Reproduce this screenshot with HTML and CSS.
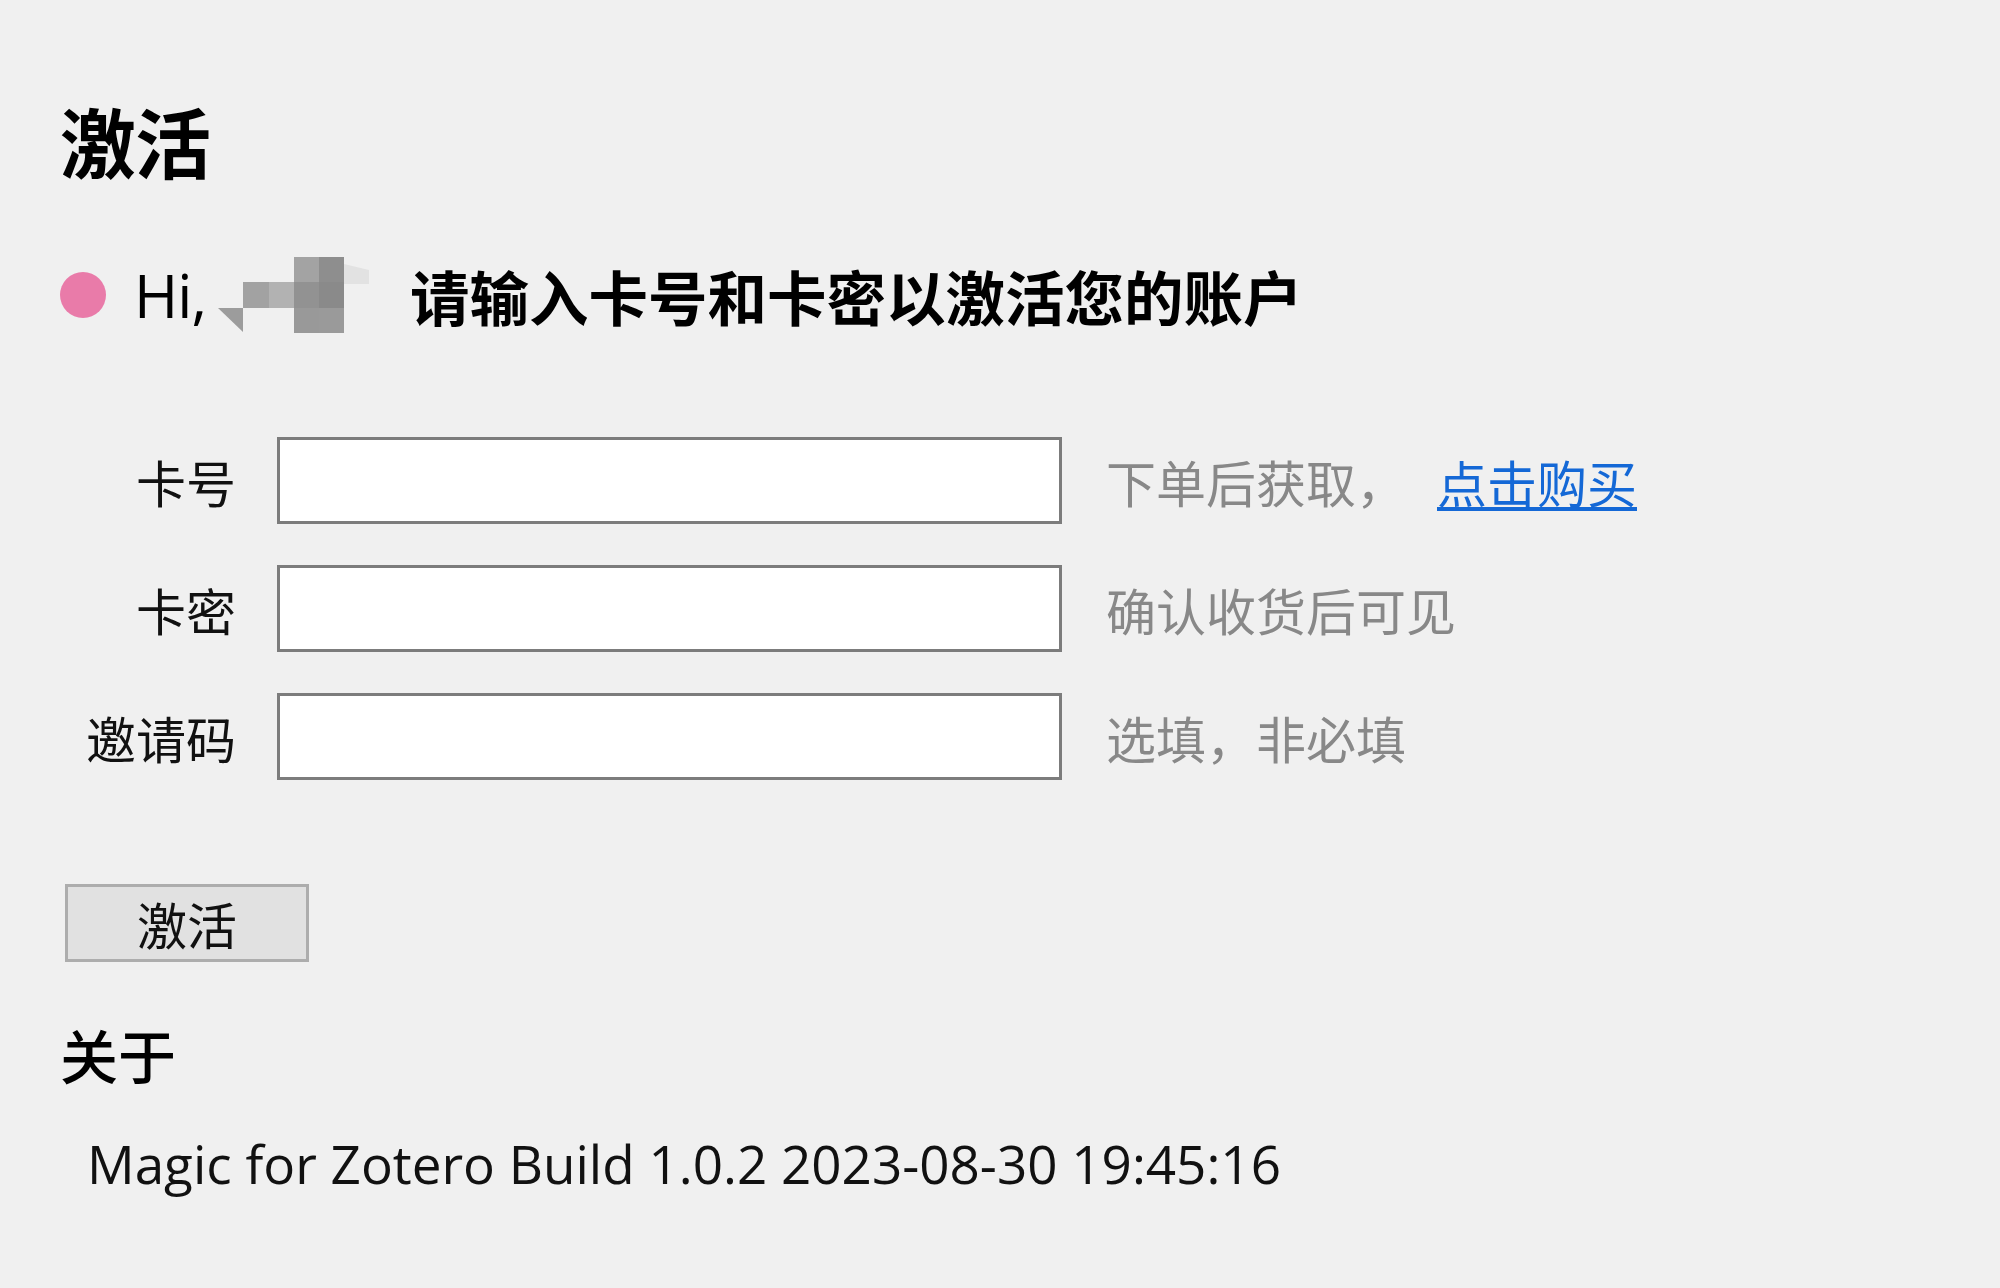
FILE: index.html
```html
<!DOCTYPE html>
<html lang="zh-CN">
<head>
<meta charset="utf-8">
<title>激活</title>
<link rel="stylesheet" href="styles.css">
</head>
<body>
<div class="page">
  <h1 class="title">激活</h1>
  <div class="greet">
    <span class="dot"></span>
    <span class="hi">Hi,</span>
    <svg class="mosaic" width="152" height="78" viewBox="217 258 152 78">
      <polygon points="217,310 242,310 242,334" fill="#9c9c9c"/>
      <rect x="242" y="284" width="26" height="26" fill="#a2a2a2"/>
      <rect x="268" y="284" width="25" height="26" fill="#b2b2b2"/>
      <rect x="293" y="259" width="25" height="25" fill="#a3a3a3"/>
      <rect x="293" y="284" width="25" height="26" fill="#929292"/>
      <rect x="293" y="310" width="25" height="25" fill="#999999"/>
      <rect x="318" y="259" width="25" height="25" fill="#8e8e8e"/>
      <rect x="318" y="284" width="25" height="26" fill="#8a8a8a"/>
      <rect x="318" y="310" width="25" height="25" fill="#9a9a9a"/>
      <polygon points="343,266 368,272 368,286 343,286" fill="#e2e2e2"/>
    </svg>
    <span class="prompt">请输入卡号和卡密以激活您的账户</span>
  </div>
  <div class="form">
    <label class="label">卡号</label>
    <div class="input"></div>
    <div class="hint">下单后获取，<a class="buy" href="#">点击购买</a></div>
    <label class="label">卡密</label>
    <div class="input"></div>
    <div class="hint">确认收货后可见</div>
    <label class="label">邀请码</label>
    <div class="input"></div>
    <div class="hint">选填，非必填</div>
  </div>
  <button class="btn">激活</button>
  <h2 class="about">关于</h2>
  <div class="build">Magic for Zotero Build 1.0.2 2023-08-30 19:45:16</div>
</div>
</body>
</html>
```
FILE: styles.css
```css
html, body {
  margin: 0;
  padding: 0;
  background: #f0f0f0;
}
body {
  width: 2000px;
  height: 1288px;
  overflow: hidden;
  font-family: "Open Sans", "Noto Sans CJK SC", sans-serif;
  color: #000;
}
.page {
  padding: 96px 0 0 60px;
}
.title {
  margin: 0;
  font-family: "Noto Sans CJK SC", sans-serif;
  font-size: 76px;
  font-weight: 700;
  line-height: 88px;
  letter-spacing: -1px;
}
.greet {
  display: flex;
  align-items: center;
  height: 80px;
  margin-top: 71px;
}
.dot {
  width: 46px;
  height: 46px;
  border-radius: 50%;
  background: #e97ba9;
  margin-right: 28px;
}
.hi {
  font-family: "Open Sans", sans-serif;
  font-size: 60px;
  letter-spacing: -1px;
  line-height: 80px;
}
.mosaic {
  display: block;
  margin-left: 12px;
}
.prompt {
  margin-left: 40px;
  font-family: "Noto Sans CJK SC", sans-serif;
  font-size: 59.5px;
  font-weight: 700;
  line-height: 80px;
}
.form {
  display: grid;
  grid-template-columns: 176px 785px auto;
  column-gap: 41px;
  row-gap: 41px;
  align-items: center;
  margin-top: 102px;
}
.label {
  text-align: right;
  font-family: "Noto Sans CJK SC", sans-serif;
  font-size: 50px;
  color: #111;
}
.input {
  height: 81px;
  background: #fff;
  border: 3px solid #7c7c7c;
}
.hint {
  margin-left: 3px;
  font-family: "Noto Sans CJK SC", sans-serif;
  font-size: 50px;
  color: #888;
  display: flex;
}
.buy {
  margin-left: 31px;
  color: #1468d6;
  text-decoration: underline;
  text-decoration-thickness: 4px;
  text-underline-offset: 4px;
}
.btn {
  display: block;
  margin: 104px 0 0 5px;
  width: 244px;
  height: 78px;
  padding: 0;
  background: #e1e1e1;
  border: 3px solid #adadad;
  font-family: "Noto Sans CJK SC", sans-serif;
  font-size: 50px;
  color: #111;
  line-height: 1;
}
.about {
  margin: 57px 0 0 0;
  font-family: "Noto Sans CJK SC", sans-serif;
  font-size: 58px;
  font-weight: 500;
  line-height: 70px;
}
.build {
  margin: 40px 0 0 27px;
  font-family: "Open Sans", sans-serif;
  font-size: 53px;
  line-height: 70px;
  color: #111;
}
```
